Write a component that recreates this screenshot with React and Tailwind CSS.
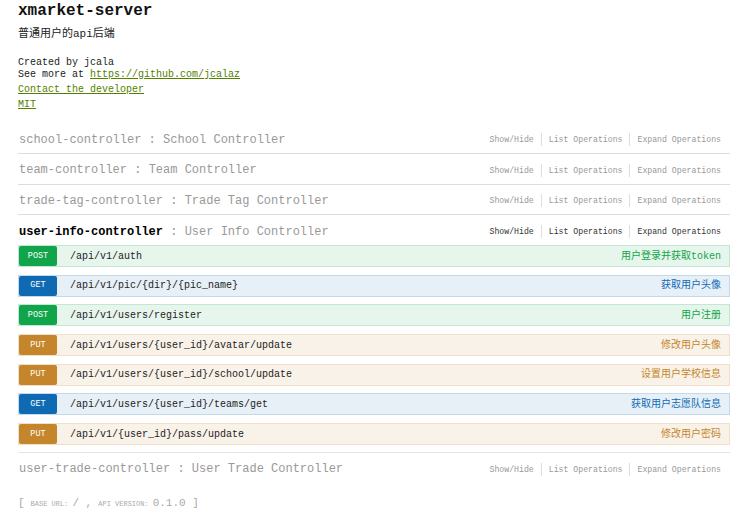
import React from "react";

const mono = { fontFamily: '"Liberation Mono", "Noto Sans CJK SC", monospace' };

const endpoints = [
  { m: "POST", path: "/api/v1/auth", sum: "用户登录并获取token" },
  { m: "GET", path: "/api/v1/pic/{dir}/{pic_name}", sum: "获取用户头像" },
  { m: "POST", path: "/api/v1/users/register", sum: "用户注册" },
  { m: "PUT", path: "/api/v1/users/{user_id}/avatar/update", sum: "修改用户头像" },
  { m: "PUT", path: "/api/v1/users/{user_id}/school/update", sum: "设置用户学校信息" },
  { m: "GET", path: "/api/v1/users/{user_id}/teams/get", sum: "获取用户志愿队信息" },
  { m: "PUT", path: "/api/v1/{user_id}/pass/update", sum: "修改用户密码" },
];

const styles = {
  POST: { row: "bg-[#e7f6ec] border-[#c3e8d1]", badge: "bg-[#10a54a]", text: "text-[#10a54a]" },
  GET: { row: "bg-[#e7f0f7] border-[#c3d9ec]", badge: "bg-[#0f6ab4]", text: "text-[#0f6ab4]" },
  PUT: { row: "bg-[#f9f2e9] border-[#f0e0ca]", badge: "bg-[#c5862b]", text: "text-[#c5862b]" },
};

function Links({ active }) {
  const c = active ? "text-[#333]" : "text-[#999]";
  return (
    <div className={`flex items-center text-[8.2px] ${c} pr-[9px]`}>
      <span className="pr-[7px] border-r border-[#ddd] leading-[13px]">Show/Hide</span>
      <span className="px-[7px] border-r border-[#ddd] leading-[13px]">List Operations</span>
      <span className="pl-[7px] leading-[13px]">Expand Operations</span>
    </div>
  );
}

function Heading({ name, desc, active, border = true, h = "h-[30.5px]" }) {
  return (
    <div className={`flex items-center justify-between pt-[3px] ${h} ${border ? "border-b border-[#ddd]" : ""}`}>
      <div className="text-[12px] pl-[1px] text-[#999]">
        <span className={active ? "text-black font-bold" : ""}>{name}</span>
        <span> : {desc}</span>
      </div>
      <Links active={active} />
    </div>
  );
}

export default function App() {
  return (
    <div className="w-[750px] h-[516px] bg-white overflow-hidden" style={mono}>
      <div className="pl-[18px] pt-[1px] w-[730px]">
        <div className="text-[16px] font-bold leading-[20px] text-[#111]">xmarket-server</div>
        <div className="text-[11px] leading-[14px] mt-[6px] text-[#222]">普通用户的api后端</div>
        <div className="mt-[16px] text-[10px] leading-[12px] text-[#222]">
          <div>Created by jcala</div>
          <div>
            See more at <span className="text-[#547f00] underline">https://github.com/jcalaz</span>
          </div>
          <div className="mt-[3px] text-[#547f00] underline">Contact the developer</div>
          <div className="mt-[3px] text-[#547f00] underline">MIT</div>
        </div>

        <div className="mt-[12.5px]">
          <Heading name="school-controller" desc="School Controller" />
          <Heading name="team-controller" desc="Team Controller" />
          <Heading name="trade-tag-controller" desc="Trade Tag Controller" />
          <div className="border-b border-[#e5e5e5] pb-[7px]">
            <Heading name="user-info-controller" desc="User Info Controller" active border={false} h="h-[30px]" />
            <div className="flex flex-col gap-[7.7px]">
              {endpoints.map((e, i) => {
                const s = styles[e.m];
                return (
                  <div key={i} className={`flex items-center h-[22px] border ${s.row}`}>
                    <span className={`${s.badge} text-white text-[8.5px] w-[38px] h-[20px] flex items-center justify-center rounded-[2px]`}>
                      {e.m}
                    </span>
                    <span className="ml-[13px] text-[10px] text-[#222]">{e.path}</span>
                    <span className={`ml-auto pr-[8px] text-[10px] ${s.text}`}>{e.sum}</span>
                  </div>
                );
              })}
            </div>
          </div>
          <Heading name="user-trade-controller" desc="User Trade Controller" border={false} h="h-[29.5px]" />
        </div>

        <div className="mt-[12px] text-[#aaa] flex items-baseline">
          <span className="text-[11px]">[</span>
          <span className="text-[7px] ml-[6px]">BASE URL:</span>
          <span className="text-[11px] ml-[4px]">/ ,</span>
          <span className="text-[7px] ml-[6px]">API VERSION:</span>
          <span className="text-[11px] ml-[4px]">0.1.0 ]</span>
        </div>
      </div>
    </div>
  );
}
